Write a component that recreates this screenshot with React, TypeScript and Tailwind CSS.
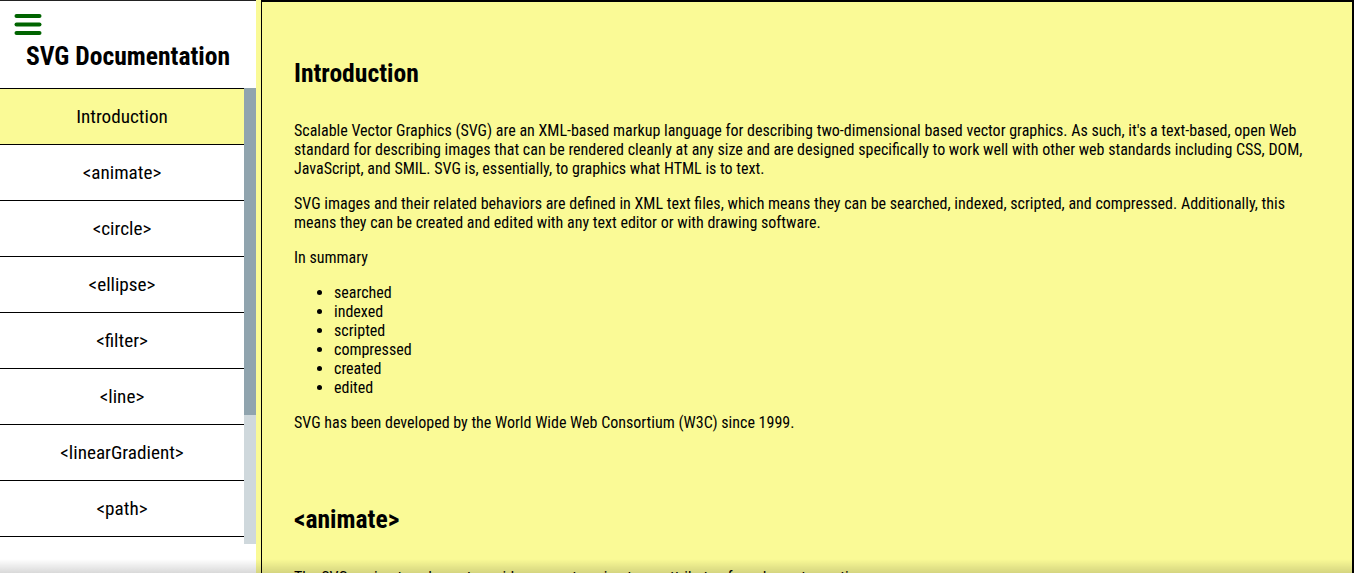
import React from "react";

const items = [
  "Introduction",
  "<animate>",
  "<circle>",
  "<ellipse>",
  "<filter>",
  "<line>",
  "<linearGradient>",
  "<path>",
  "<polygon>",
];

const font = { fontFamily: '"Roboto Condensed", "Liberation Sans Narrow", Roboto, sans-serif' };

export default function App() {
  return (
    <div
      className="relative flex h-[573px] w-full overflow-hidden bg-[#fafa96] text-black"
      style={font}
    >
      {/* Sidebar */}
      <aside className="flex w-[256px] shrink-0 flex-col border-t border-[#222] bg-white">
        <div className="relative h-[87px] shrink-0">
          <svg
            className="absolute left-[13px] top-[10px]"
            width="30"
            height="26"
            viewBox="0 0 30 26"
          >
            <g stroke="#006400" strokeWidth="4" strokeLinecap="round">
              <line x1="3.5" y1="5" x2="26.5" y2="5" />
              <line x1="3.5" y1="13.5" x2="26.5" y2="13.5" />
              <line x1="3.5" y1="22" x2="26.5" y2="22" />
            </g>
          </svg>
          <h1 className="pt-[41px] text-center text-[25.6px] font-bold leading-[28px]">
            SVG Documentation
          </h1>
        </div>
        <div className="flex h-[456px] shrink-0 overflow-hidden">
          <ul className="w-[244px] shrink-0">
            {items.map((it, i) => (
              <li
                key={it}
                className={`flex h-[56px] items-center justify-center border-t border-black pt-[2px] text-[19.2px] ${
                  i === 0 ? "bg-[#fafa96]" : "bg-white"
                }`}
              >
                {it}
              </li>
            ))}
          </ul>
          <div className="flex w-[12px] shrink-0 flex-col bg-[#cfd8dc]">
            <div className="h-[327px] bg-[#90a4ae]" />
          </div>
        </div>
        <div className="flex-1 bg-white" />
      </aside>

      {/* Main */}
      <main className="ml-[5px] flex-1 border-l border-t-2 border-r-2 border-black bg-[#fafa96] pl-[32px] pr-[40px] pt-[53px] text-[16px] leading-[19px]">
        <h2 className="pt-[2px] text-[25.6px] font-bold leading-[33px]">Introduction</h2>
        <p className="mt-[31px]">
          Scalable Vector Graphics (SVG) are an XML-based markup language for describing two-dimensional based vector graphics. As such, it's a text-based, open Web standard for describing images that can be rendered cleanly at any size and are designed specifically to work well with other web standards including CSS, DOM, JavaScript, and SMIL. SVG is, essentially, to graphics what HTML is to text.
        </p>
        <p className="mt-[16px]">
          SVG images and their related behaviors are defined in XML text files, which means they can be searched, indexed, scripted, and compressed. Additionally, this means they can be created and edited with any text editor or with drawing software.
        </p>
        <p className="mt-[16px]">In summary</p>
        <ul className="mt-[16px] list-disc pl-[40px]">
          <li>searched</li>
          <li>indexed</li>
          <li>scripted</li>
          <li>compressed</li>
          <li>created</li>
          <li>edited</li>
        </ul>
        <p className="mt-[16px]">
          SVG has been developed by the World Wide Web Consortium (W3C) since 1999.
        </p>
        <h2 className="mt-[69px] pt-[2px] text-[25.6px] font-bold leading-[33px]">&lt;animate&gt;</h2>
        <p className="mt-[32px]">
          The SVG &lt;animate&gt; element provides a way to animate an attribute of an element over time.
        </p>
      </main>

      {/* bottom fade shadow */}
      <div className="pointer-events-none absolute bottom-0 left-0 h-[14px] w-full bg-gradient-to-b from-transparent to-black/15" />
    </div>
  );
}
